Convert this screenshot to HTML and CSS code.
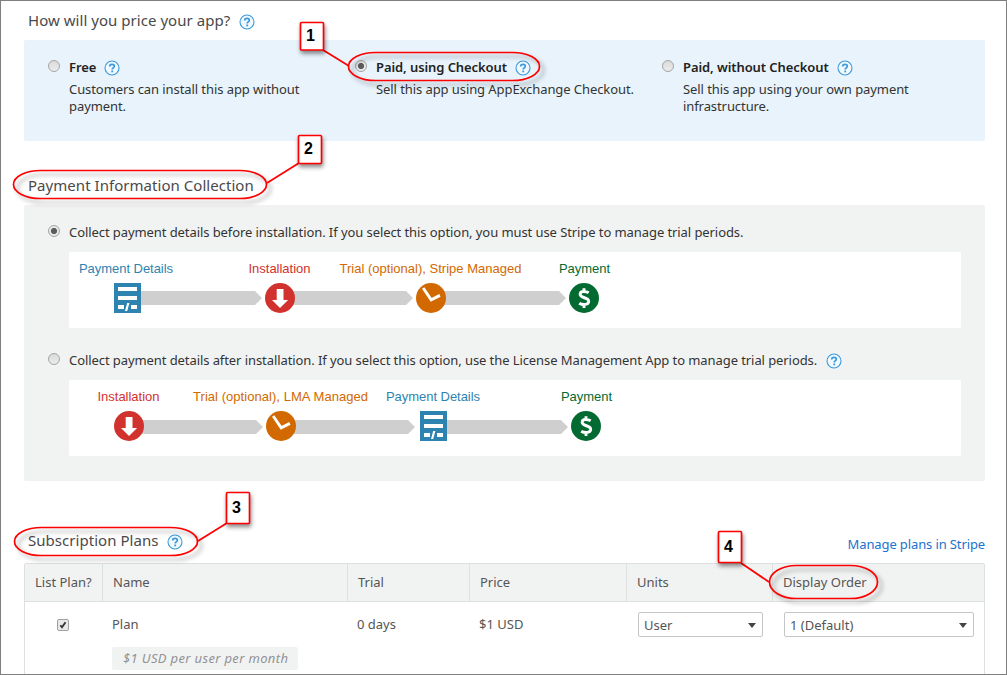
FILE: index.html
```html
<!DOCTYPE html>
<html lang="en">
<head>
    <meta charset="UTF-8">
    <meta name="viewport" content="width=device-width, initial-scale=1.0">
    <title>App Pricing</title>
    <link rel="stylesheet" href="styles.css">
</head>
<body>
    <!-- shared icons -->
    <svg class="sprite" width="0" height="0">
        <symbol id="help" viewBox="0 0 16 16">
            <circle cx="8" cy="8" r="7" fill="#f2f9fe" stroke="#3a9add" stroke-width="1.1"/>
            <path d="M5.700 6.400C5.700 5 6.700 4.400 8 4.400s2.300.700 2.300 1.900c0 1.500-2.100 1.600-2.100 3.100" fill="none" stroke="#3a9add" stroke-width="1.700"/>
            <rect x="7.300" y="10.500" width="1.800" height="1.800" fill="#3a9add"/>
        </symbol>
        <symbol id="details" viewBox="0 0 27 30">
            <rect width="27" height="30" fill="#2f83b0"/>
            <path d="M4 4h19v4H4zM4 13h19v4H4zM4 22h6v4H4zM17 22h6v4h-6zM13.2 20h2.2l-2.2 8H11z" fill="#fff"/>
        </symbol>
        <symbol id="install" viewBox="0 0 30 30">
            <circle cx="15" cy="15" r="15" fill="#d2322d"/>
            <path d="M11.7 6h6.8v11h4.6L15 25 7 17h4.7z" fill="#fff"/>
        </symbol>
        <symbol id="trial" viewBox="0 0 30 30">
            <circle cx="15" cy="15" r="15" fill="#d26900"/>
            <path d="M8 6.2l7.2 10.6 7.4-3.8" fill="none" stroke="#fff" stroke-width="2.9" stroke-linecap="square"/>
        </symbol>
        <symbol id="pay" viewBox="0 0 30 30">
            <circle cx="15" cy="15" r="15" fill="#036b31"/>
            <path d="M19.7 9.8c-1.5-.9-3-1.3-4.8-1.3-2.3 0-3.8 1-3.8 2.8 0 4.2 8.6 2.700 8.6 7 0 2-1.8 3.200-4.500 3.200-2 0-3.800-.5-5-1.300M15 5.300v4M15 21v4" fill="none" stroke="#fff" stroke-width="2.9"/>
        </symbol>
    </svg>

    <div class="page">
        <h2 class="heading heading-price"><span>How will you price your app?</span><svg class="help"><use href="#help"/></svg></h2>
        <div class="price-box">
            <div class="option">
                <i class="radio"></i>
                <div>
                    <div class="option-title"><b>Free</b><svg class="help"><use href="#help"/></svg></div>
                    <p>Customers can install this app without<br>payment.</p>
                </div>
            </div>
            <div class="option">
                <i class="radio checked"></i>
                <div>
                    <div class="option-title"><b>Paid, using Checkout</b><svg class="help"><use href="#help"/></svg></div>
                    <p>Sell this app using AppExchange Checkout.</p>
                </div>
            </div>
            <div class="option">
                <i class="radio"></i>
                <div>
                    <div class="option-title"><b>Paid, without Checkout</b><svg class="help"><use href="#help"/></svg></div>
                    <p>Sell this app using your own payment<br>infrastructure.</p>
                </div>
            </div>
        </div>

        <h2 class="heading heading-payment"><span>Payment Information Collection</span></h2>
        <div class="payment-box">
            <div class="collect">
                <i class="radio checked"></i>
                <span>Collect payment details before installation. If you select this option, you must use Stripe to manage trial periods.</span>
            </div>
            <svg class="flow" viewBox="0 0 892 76">
                <path class="track" d="M72 39h114l7 7-7 7H72zM218 39h119l7 7-7 7H218zM368 39h122l7 7-7 7H368z"/>
                <use href="#details" x="45" y="31" width="27" height="30"/>
                <use href="#install" x="196" y="31" width="30" height="30"/>
                <use href="#trial" x="347" y="31" width="30" height="30"/>
                <use href="#pay" x="500" y="31" width="30" height="30"/>
                <text class="blue" x="10" y="21" textLength="94">Payment Details</text>
                <text class="red" x="179.5" y="21" textLength="62">Installation</text>
                <text class="orange" x="270.5" y="21" textLength="182">Trial (optional), Stripe Managed</text>
                <text class="green" x="490" y="21" textLength="51">Payment</text>
            </svg>
            <div class="collect collect-after">
                <i class="radio"></i>
                <span>Collect payment details after installation. If you select this option, use the License Management App to manage trial periods.</span>
                <svg class="help"><use href="#help"/></svg>
            </div>
            <svg class="flow" viewBox="0 0 892 76">
                <path class="track" d="M72 40h115l7 7-7 7H72zM218 40h121l7 7-7 7H218zM374 40h118l7 7-7 7H374z"/>
                <use href="#install" x="45" y="31" width="30" height="30"/>
                <use href="#trial" x="197" y="31" width="30" height="30"/>
                <use href="#details" x="351" y="31" width="27" height="30"/>
                <use href="#pay" x="502" y="31" width="30" height="30"/>
                <text class="red" x="28.5" y="21" textLength="62">Installation</text>
                <text class="orange" x="124" y="21" textLength="175">Trial (optional), LMA Managed</text>
                <text class="blue" x="317" y="21" textLength="94">Payment Details</text>
                <text class="green" x="492" y="21" textLength="51">Payment</text>
            </svg>
        </div>

        <div class="plans-head">
            <h2 class="heading"><span>Subscription Plans</span><svg class="help"><use href="#help"/></svg></h2>
            <a href="#">Manage plans in Stripe</a>
        </div>
        <div class="plans">
            <div class="row row-head">
                <div>List Plan?</div>
                <div>Name</div>
                <div>Trial</div>
                <div>Price</div>
                <div>Units</div>
                <div>Display Order</div>
            </div>
            <div class="row row-body">
                <div class="cell-check">
                    <svg class="check" viewBox="0 0 12 12"><path d="M2.8 6.3l2 2.4 4.2-6" fill="none" stroke="#333" stroke-width="2.2"/></svg>
                </div>
                <div>Plan<div class="note"><span>$1 USD per user per month</span></div></div>
                <div>0 days</div>
                <div>$1 USD</div>
                <div class="cell-select"><div class="select"><span>User</span><i></i></div></div>
                <div class="cell-select"><div class="select"><span>1 (Default)</span><i></i></div></div>
            </div>
        </div>

        <!-- numbered callouts over the page -->
        <svg class="callouts" viewBox="0 0 1007 675">
            <g class="mark">
                <rect x="348.5" y="52.5" width="191" height="28" rx="27" ry="14"/>
                <rect x="13.5" y="170.5" width="253" height="28" rx="27" ry="14"/>
                <rect x="14.5" y="527.5" width="183" height="28" rx="27" ry="14"/>
                <rect x="769.5" y="565.5" width="108" height="33" rx="27" ry="16.5"/>
            </g>
            <path class="line" d="M323 50l26 16M299 163l-32 20M227 523l-29 18M741 563l28 19"/>
            <g class="tag">
                <rect x="300.5" y="22.500" width="23" height="27.5" rx="1"/>
                <rect x="298.5" y="135.5" width="23" height="28" rx="1"/>
                <rect x="226.5" y="492.5" width="23" height="31" rx="1"/>
                <rect x="718.5" y="531.5" width="23" height="31" rx="1"/>
            </g>
            <g class="num">
                <text x="306" y="41">1</text>
                <text x="304" y="154">2</text>
                <text x="232" y="513">3</text>
                <text x="724" y="552">4</text>
            </g>
        </svg>
    </div>
</body>
</html>
```

FILE: styles.css
```css
* {
    box-sizing: border-box;
}
body {
    margin: 0;
    font-family: "Noto Sans", sans-serif;
    font-size: 13px;
    letter-spacing: -0.08px;
    color: #333;
    background-color: #fff;
}
.sprite {
    display: block;
}
.page {
    position: relative;
    width: 1007px;
    height: 675px;
    overflow: hidden;
    border: 1px solid #7f7f7f;
    padding: 8px 21px 0 23px;
}
.heading {
    display: flex;
    align-items: center;
    margin: 0;
    padding-left: 4px;
    height: 22px;
    font-size: 15px;
    font-weight: normal;
    letter-spacing: 0.04px;
    color: #4a4a4a;
    white-space: nowrap;
}
.help {
    display: block;
    flex: none;
    width: 16px;
    height: 16px;
    margin: 3px 0 0 9px;
}
.price-box {
    display: flex;
    height: 101px;
    margin-top: 9px;
    padding: 18px 0 0 24px;
    background-color: #e8f3fc;
    border-radius: 2px;
}
.option {
    display: flex;
    width: 307px;
    white-space: nowrap;
}
.option-title {
    display: flex;
    align-items: center;
    height: 18px;
    color: #222;
}
.option-title b {
    font-weight: 600;
}
.option-title .help {
    margin-top: 2px;
    margin-left: 8px;
}
.option p {
    margin: 5px 0 0;
    line-height: 17px;
}
.radio {
    flex: none;
    width: 12px;
    height: 12px;
    margin: 2px 9px 0 0;
    border: 1px solid #a5a5a5;
    border-radius: 50%;
    background: linear-gradient(#dadada, #ececec);
}
.radio.checked {
    background: radial-gradient(circle, #5c5c5c 0, #5c5c5c 2.7px, #e8e8e8 3.5px);
}
.heading-payment {
    margin-top: 33px;
}
.payment-box {
    height: 276px;
    margin-top: 9px;
    padding: 17px 24px 0;
    background-color: #f1f3f2;
    border-radius: 2px;
}
.collect {
    display: flex;
    height: 20px;
    line-height: 20px;
    white-space: nowrap;
}
.collect .radio {
    margin-top: 3px;
}
.collect-after {
    margin-top: 22px;
}
.flow {
    display: block;
    width: 892px;
    height: 76px;
    margin: 10px 0 0 21px;
    background-color: #fff;
    border-radius: 2px;
    font-family: "Liberation Sans", Arial, sans-serif;
    font-size: 13px;
    letter-spacing: 0;
}
.track {
    fill: #cfcfcf;
}
.blue {
    fill: #2f83b0;
}
.red {
    fill: #d2322d;
}
.orange {
    fill: #d26900;
}
.green {
    fill: #036b31;
}
.plans-head {
    display: flex;
    justify-content: space-between;
    height: 34px;
    margin-top: 48px;
}
.plans-head a {
    margin-top: 5px;
    color: #1a73d0;
    text-decoration: none;
    line-height: 20px;
    letter-spacing: -0.12px;
}
.plans {
    height: 130px;
    border: 1px solid #dce0de;
    border-radius: 2px 2px 0 0;
    color: #555;
    letter-spacing: 0;
}
.row {
    display: grid;
    grid-template-columns: 78px 245px 122px 157px 146px 211px;
}
.row-head {
    height: 38px;
    line-height: 37px;
    background-color: #f1f3f2;
    border-bottom: 1px solid #dce0de;
}
.row-head div {
    padding-left: 10px;
    border-right: 1px solid #dce0de;
}
.row-head div:last-child {
    border-right: none;
}
.row-body > div {
    padding: 12px 0 0 9px;
    line-height: 20px;
}
.row-body .cell-check {
    padding: 17px 0 0 32px;
}
.check {
    display: block;
    width: 12px;
    height: 12px;
    border: 1px solid #a0a0a0;
    border-radius: 2px;
    background-color: #e8e8e8;
}
.note {
    width: 186px;
    height: 23px;
    margin-top: 13px;
    padding-left: 11px;
    line-height: 23px;
    font-style: italic;
    letter-spacing: 0.35px;
    color: #929292;
    background-color: #f1f3f2;
    border-radius: 2px;
}
.row-body .cell-select {
    padding: 10px 10px 0 11px;
}
.select {
    display: flex;
    align-items: center;
    justify-content: space-between;
    height: 25px;
    padding: 0 6px 0 5px;
    border: 1px solid #c3c8c6;
    border-radius: 2px;
    background-color: #fff;
}
.select i {
    margin-top: 2px;
    border: 4px solid transparent;
    border-top: 5px solid #444;
    border-bottom: none;
}
.callouts {
    position: absolute;
    top: -1px;
    left: -1px;
    width: 1007px;
    height: 675px;
    pointer-events: none;
}
.mark {
    fill: none;
    stroke: #f00;
    stroke-width: 1.7;
    filter: drop-shadow(4px 4px 2px rgba(0, 0, 0, 0.35));
}
.line {
    stroke: #f00;
    stroke-width: 1.7;
}
.tag {
    fill: #fff;
    stroke: #f00;
    stroke-width: 1.7;
    filter: drop-shadow(1px 3px 2px rgba(0, 0, 0, 0.45));
}
.num {
    font: bold 16px "Liberation Sans", Arial, sans-serif;
    fill: #000;
}
```
